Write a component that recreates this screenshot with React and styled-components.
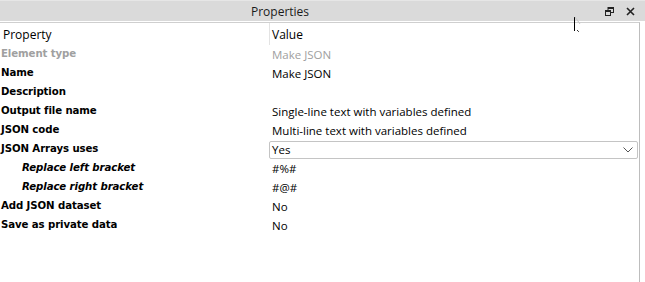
import styled, { createGlobalStyle } from 'styled-components';

const GlobalStyle = createGlobalStyle`
  html, body {
    margin: 0;
    padding: 0;
    background: #ffffff;
  }
  body {
    width: 645px;
    height: 282px;
    overflow: hidden;
  }
`;

const rows = [
    { label: 'Element type', value: 'Make JSON', disabled: true },
    { label: 'Name', value: 'Make JSON' },
    { label: 'Description', value: '' },
    { label: 'Output file name', value: 'Single-line text with variables defined' },
    { label: 'JSON code', value: 'Multi-line text with variables defined' },
    { label: 'JSON Arrays uses', value: 'Yes', select: true },
    { label: 'Replace left bracket', value: '#%#', child: true },
    { label: 'Replace right bracket', value: '#@#', child: true },
    { label: 'Add JSON dataset', value: 'No' },
    { label: 'Save as private data', value: 'No' },
];

const Window = styled.div`
    position: relative;
    width: 645px;
    height: 282px;
    display: flex;
    flex-direction: column;
    background: #fff;
`;

const TitleBar = styled.div`
    height: 20px;
    background: #dadada;
    border-top: 1px solid #e6e6e6;
    display: flex;
    align-items: center;
    font-family: "Open Sans", "Noto Sans", sans-serif;
    font-size: 12px;
    color: #1a1a1a;
`;

const Title = styled.div`
    flex: 1;
    text-align: center;
    padding-right: 45px;
`;

const TitleButtons = styled.div`
    display: flex;
    align-items: center;
    gap: 12px;
    padding-right: 10px;
`;

const Panel = styled.div`
    flex: 1;
    margin: 1px 5px 0 0;
    border-top: 1px solid #cfcfcf;
    border-right: 1px solid #bdbdbd;
    display: flex;
    flex-direction: column;
`;

const Row = styled.div`
    display: grid;
    grid-template-columns: 269px 1fr;
    height: ${({ $h }) => $h || 19}px;
    align-items: center;
`;

const HeaderCell = styled.div`
    font-family: "Open Sans", "Noto Sans", sans-serif;
    font-size: 12px;
    color: #000;
    padding-left: ${({ $divider }) => ($divider ? 2 : 3)}px;
    height: 100%;
    display: flex;
    align-items: center;
    border-left: ${({ $divider }) => ($divider ? '1px solid #e3e3e3' : 'none')};
`;

const Label = styled.div`
    font-family: "DejaVu Sans", Verdana, sans-serif;
    font-weight: bold;
    font-size: 10.2px;
    letter-spacing: -0.1px;
    font-style: ${({ $child }) => ($child ? 'italic' : 'normal')};
    padding-left: ${({ $child }) => ($child ? 22 : 1)}px;
    color: ${({ $disabled }) => ($disabled ? '#a0a0a0' : '#000')};
    margin-top: -3px;
`;

const Value = styled.div`
    font-family: "Open Sans", "Noto Sans", sans-serif;
    font-size: 11.5px;
    padding-left: 3px;
    color: ${({ $disabled }) => ($disabled ? '#a0a0a0' : '#000')};
    white-space: nowrap;
`;

const Select = styled.div`
    height: 16px;
    border: 1px solid #c4c4c4;
    border-radius: 2px;
    margin-right: 1px;
    display: flex;
    align-items: center;
    justify-content: space-between;
    font-family: "Open Sans", "Noto Sans", sans-serif;
    font-size: 11.5px;
    padding: 0 4px 0 2px;
`;

const Cursor = styled.svg`
    position: absolute;
    left: 572px;
    top: 16px;
`;

const RestoreIcon = () => (
    <svg width="9" height="9" viewBox="0 0 9 9">
        <rect x="3" y="0.5" width="5.5" height="5" fill="none" stroke="#222" strokeWidth="1" />
        <rect x="0.5" y="3.5" width="5" height="5" fill="#dadada" stroke="#222" strokeWidth="1" />
        <line x1="3" y1="1" x2="8.5" y2="1" stroke="#222" strokeWidth="2" />
        <line x1="0.5" y1="4" x2="5.5" y2="4" stroke="#222" strokeWidth="2" />
    </svg>
);

const CloseIcon = () => (
    <svg width="9" height="9" viewBox="0 0 9 9">
        <path d="M1 1 L8 8 M8 1 L1 8" stroke="#222" strokeWidth="1.6" />
    </svg>
);

const Chevron = () => (
    <svg width="10" height="6" viewBox="0 0 10 6">
        <path d="M0.5 0.5 L5 5 L9.5 0.5" fill="none" stroke="#555" strokeWidth="1" />
    </svg>
);

const App = () => {
    return (
        <Window>
            <GlobalStyle />
            <TitleBar>
                <Title>Properties</Title>
                <TitleButtons>
                    <RestoreIcon />
                    <CloseIcon />
                </TitleButtons>
            </TitleBar>
            <Panel>
                <Row $h={22}>
                    <HeaderCell>Property</HeaderCell>
                    <HeaderCell $divider>Value</HeaderCell>
                </Row>
                {rows.map(row => (
                    <Row key={row.label}>
                        <Label $child={row.child} $disabled={row.disabled}>{row.label}</Label>
                        {row.select ? (
                            <Select>
                                <span>{row.value}</span>
                                <Chevron />
                            </Select>
                        ) : (
                            <Value $disabled={row.disabled}>{row.value}</Value>
                        )}
                    </Row>
                ))}
            </Panel>
            <Cursor width="10" height="18" viewBox="0 0 10 18">
                <line x1="2.5" y1="1" x2="2.5" y2="15" stroke="#000" strokeWidth="1" />
                <line x1="3" y1="1" x2="8" y2="8" stroke="#c8c8c8" strokeWidth="1" />
                <rect x="5" y="14" width="1" height="1" fill="#333" />
                <rect x="6" y="15" width="1" height="1" fill="#555" />
            </Cursor>
        </Window>
    );
};

export default App;
